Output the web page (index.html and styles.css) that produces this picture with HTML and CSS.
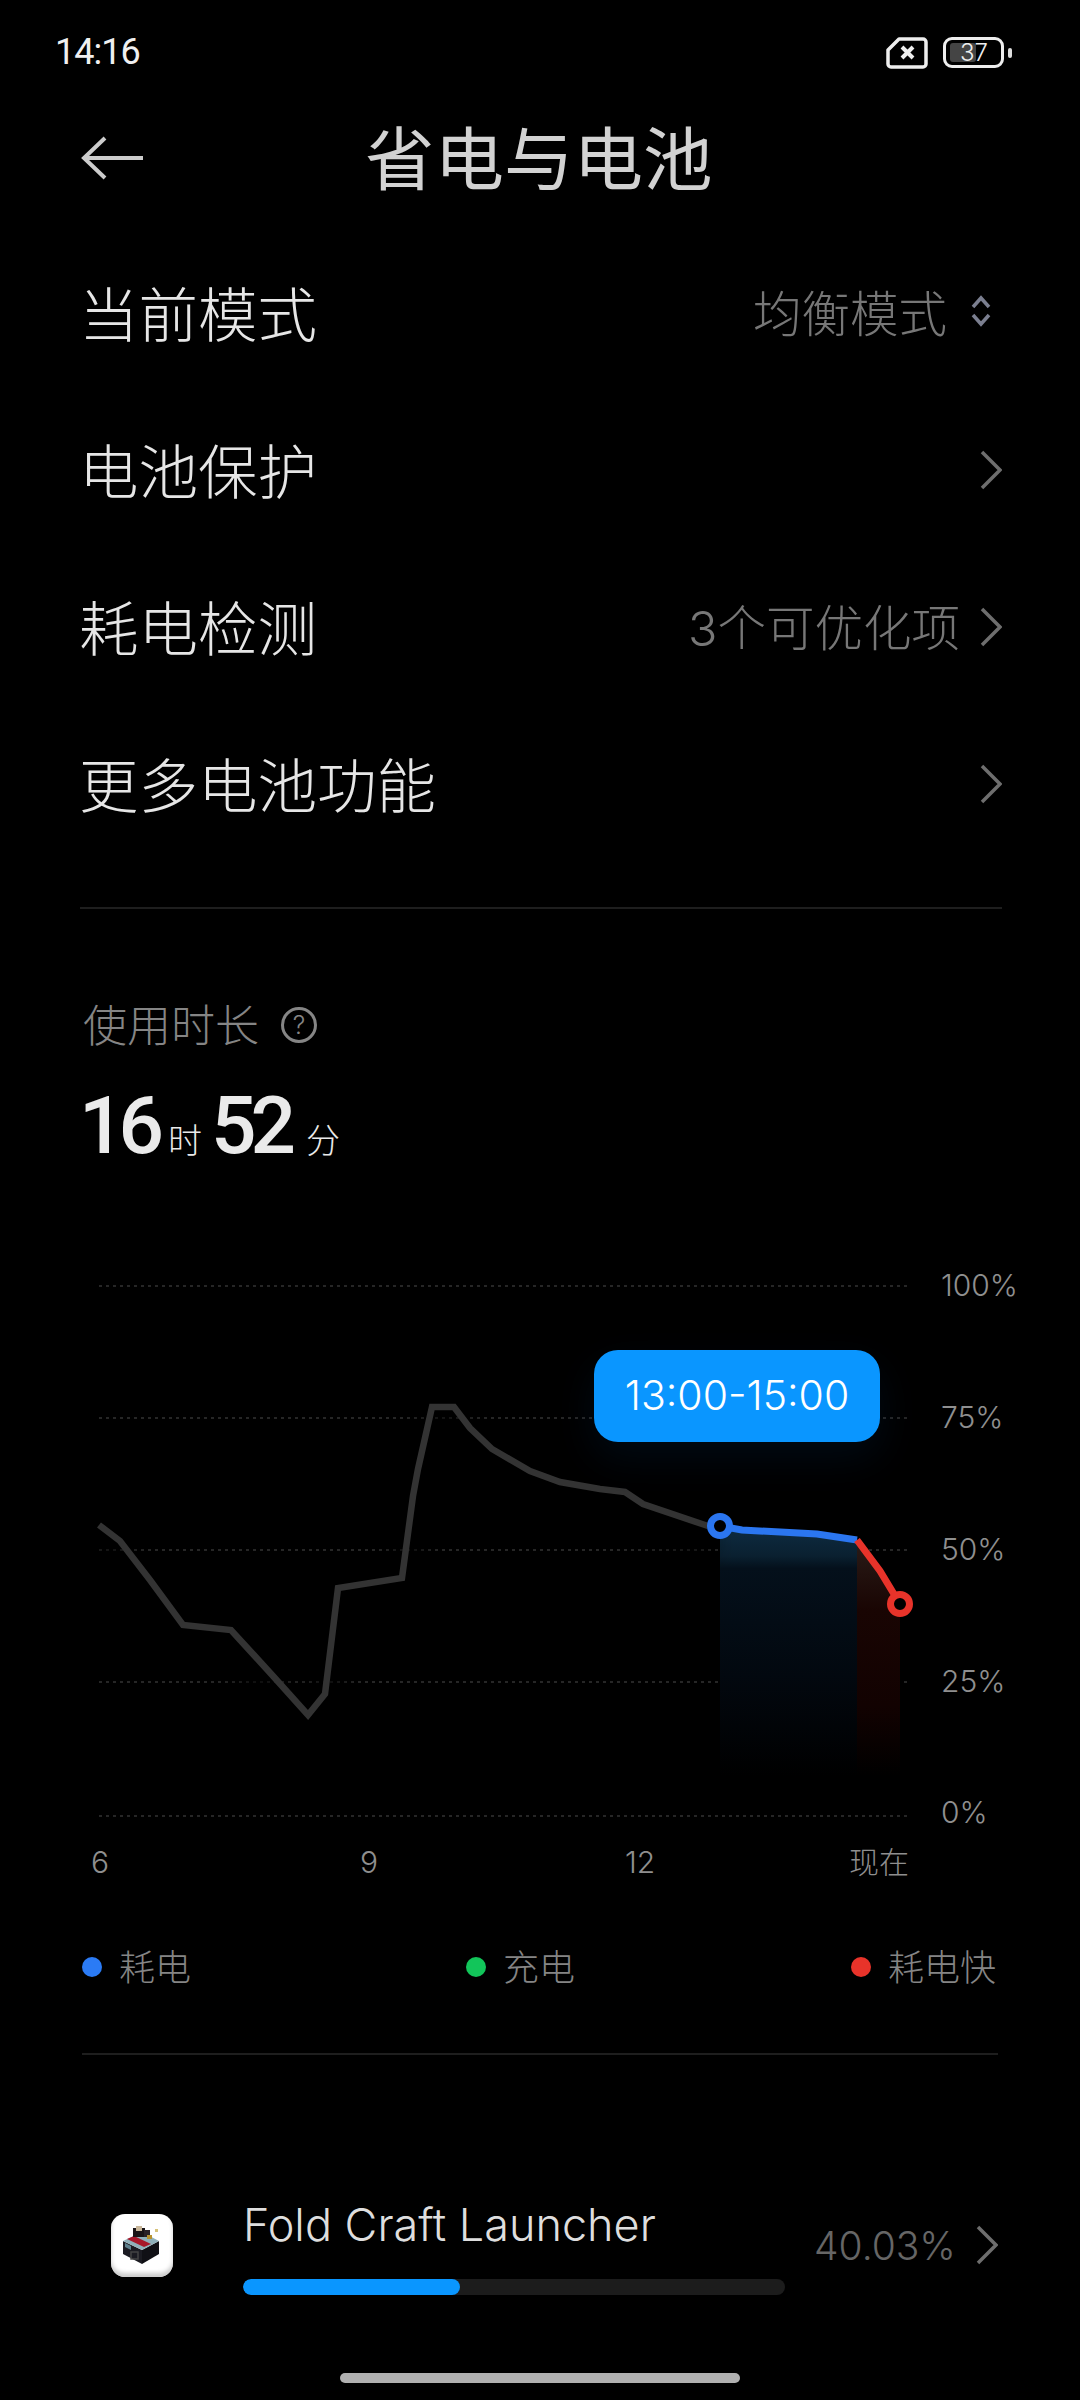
FILE: index.html
```html
<!DOCTYPE html>
<html lang="zh-CN">
<head>
  <meta charset="UTF-8" />
  <meta name="viewport" content="width=device-width, initial-scale=1.0"/>
  <title>省电与电池</title>
  <link rel="stylesheet" href="styles.css">
</head>
<body>
  <div class="page">
    <div class="status">
      <span class="clock">14:16</span>
      <div class="status-icons">
        <svg width="42" height="33" viewBox="0 0 42 33">
          <path d="M13 3H37a3 3 0 0 1 3 3V28a3 3 0 0 1-3 3H5a3 3 0 0 1-3-3V14Z" fill="none" stroke="#eee" stroke-width="3.5" stroke-linejoin="round"/>
          <path d="M16 11L27 22M27 11L16 22" stroke="#eee" stroke-width="4"/>
        </svg>
        <div class="battery">
          <div class="battery-fill"></div>
          <span class="battery-num">37</span>
        </div>
        <div class="battery-nub"></div>
      </div>
    </div>

    <div class="header">
      <svg class="back" width="64" height="44" viewBox="0 0 64 44">
        <path d="M62 22H4M24 2L3 22L24 42" fill="none" stroke="#ccc" stroke-width="4"/>
      </svg>
      <h1>省电与电池</h1>
    </div>

    <div class="list">
      <div class="row">
        <span class="row-label">当前模式</span>
        <span class="row-value">均衡模式</span>
        <svg class="updown" width="24" height="34" viewBox="0 0 24 34">
          <path d="M4 13L12 4L20 13M4 21L12 30L20 21" fill="none" stroke="#7b7f90" stroke-width="3.5"/>
        </svg>
      </div>
      <div class="row">
        <span class="row-label">电池保护</span>
        <svg class="chevron" width="22" height="40" viewBox="0 0 22 40"><path d="M2 2L20 20L2 38"/></svg>
      </div>
      <div class="row">
        <span class="row-label">耗电检测</span>
        <span class="row-value">3个可优化项</span>
        <svg class="chevron" width="22" height="40" viewBox="0 0 22 40"><path d="M2 2L20 20L2 38"/></svg>
      </div>
      <div class="row">
        <span class="row-label">更多电池功能</span>
        <svg class="chevron" width="22" height="40" viewBox="0 0 22 40"><path d="M2 2L20 20L2 38"/></svg>
      </div>
    </div>

    <div class="divider top-divider"></div>

    <div class="usage-title">
      <span>使用时长</span>
      <span class="help">?</span>
    </div>
    <div class="duration">
      <span class="big">16</span><span class="unit">时</span><span class="big">52</span><span class="unit unit-min">分</span>
    </div>

    <div class="chart">
      <svg width="1080" height="640" viewBox="0 1250 1080 640">
        <defs>
          <linearGradient id="blueFade" x1="0" y1="0" x2="0" y2="1">
            <stop offset="0" stop-color="#0e2c42"/>
            <stop offset="0.12" stop-color="#0a2030"/>
            <stop offset="0.17" stop-color="#04101b"/>
            <stop offset="0.6" stop-color="#02080f"/>
            <stop offset="1" stop-color="#000"/>
          </linearGradient>
          <linearGradient id="redFade" x1="0" y1="0" x2="0" y2="1">
            <stop offset="0" stop-color="#2a1c18"/>
            <stop offset="0.3" stop-color="#190503"/>
            <stop offset="0.7" stop-color="#120201"/>
            <stop offset="1" stop-color="#000"/>
          </linearGradient>
          <filter id="soft" x="-10%" y="-20%" width="120%" height="150%">
            <feGaussianBlur stdDeviation="12"/>
          </filter>
        </defs>

        <g class="grid">
          <line x1="99" y1="1286" x2="910" y2="1286"/>
          <line x1="99" y1="1418" x2="910" y2="1418"/>
          <line x1="99" y1="1550" x2="910" y2="1550"/>
          <line x1="99" y1="1682" x2="910" y2="1682"/>
          <line x1="99" y1="1816" x2="910" y2="1816"/>
        </g>

        <polygon points="720,1526 742,1530 817,1534 857,1540 857,1776 720,1776" fill="url(#blueFade)"/>
        <polygon points="857,1540 880,1571 900,1604 900,1776 857,1776" fill="url(#redFade)"/>

        <polyline class="glow" transform="translate(0 20)" points="99,1525 120,1541 150,1580 183,1625 231,1630 273,1676 308,1700 325,1694 338,1588 402,1578 413,1496 418,1469 432,1407 454,1407 470,1428 492,1449 530,1471 560,1482 600,1489 625,1492 643,1504 708,1526" filter="url(#soft)"/>
        <polyline class="line-gray" points="99,1525 120,1541 150,1580 183,1625 231,1630 273,1676 308,1715 325,1694 338,1588 402,1578 413,1496 418,1469 432,1407 454,1407 470,1428 492,1449 530,1471 560,1482 600,1489 625,1492 643,1504 708,1526"/>
        <polyline class="line-blue" points="720,1526 742,1530 817,1534 857,1540"/>
        <polyline class="line-red" points="857,1540 880,1571 900,1604"/>
        <circle class="dot-blue" cx="720" cy="1526" r="9.5"/>
        <circle class="dot-red" cx="900" cy="1604" r="9.5"/>

        <text class="axis" x="941" y="1296">100%</text>
        <text class="axis" x="941" y="1428">75%</text>
        <text class="axis" x="941" y="1560">50%</text>
        <text class="axis" x="941" y="1692">25%</text>
        <text class="axis" x="941" y="1823">0%</text>

        <text class="axis" x="91" y="1873">6</text>
        <text class="axis" x="360" y="1873">9</text>
        <text class="axis" x="625" y="1873">12</text>
        <text class="axis" x="849" y="1873">现在</text>
      </svg>
      <div class="tip">13:00-15:00</div>
    </div>

    <div class="legend">
      <div class="legend-item"><span class="ldot blue"></span><span class="legend-text">耗电</span></div>
      <div class="legend-item"><span class="ldot green"></span><span class="legend-text">充电</span></div>
      <div class="legend-item"><span class="ldot red"></span><span class="legend-text">耗电快</span></div>
    </div>

    <div class="divider bottom-divider"></div>

    <div class="app">
      <div class="app-icon">
        <svg width="62" height="62" viewBox="0 0 62 62">
          <polygon points="12,27 31,36 31,50 12,40" fill="#1b1b22"/>
          <polygon points="48,27 31,36 31,50 48,40" fill="#101015"/>
          <polygon points="12,27 31,18 48,27 31,36" fill="#8fb0ba"/>
          <polygon points="16,25 33,33 40,30 23,22" fill="#a8182a"/>
          <polygon points="14,29 20,32 20,36 14,33" fill="#5d7f8c"/>
          <rect x="20" y="38" width="7" height="7" fill="none" stroke="#444" stroke-width="1.5"/>
          <rect x="22" y="14" width="12" height="9" fill="#1a1416"/>
          <rect x="25" y="12" width="6" height="5" fill="#c9b79a"/>
          <rect x="33" y="16" width="6" height="7" fill="#2a2226"/>
          <rect x="36" y="21" width="5" height="4" fill="#b7912e"/>
          <rect x="44" y="15" width="3" height="3" fill="#d6c27a"/>
        </svg>
      </div>
      <div class="app-main">
        <div class="app-name">Fold Craft Launcher</div>
        <div class="bar"><div class="bar-fill" style="width: 40.03%"></div></div>
      </div>
      <span class="app-pct">40.03%</span>
      <svg class="chevron" width="22" height="40" viewBox="0 0 22 40"><path d="M2 2L20 20L2 38"/></svg>
    </div>

    <div class="home-bar"></div>
  </div>
</body>
</html>
```

FILE: styles.css
```css
* {
  box-sizing: border-box;
}
body {
  margin: 0;
  background: #000;
  font-family: Inter, "Noto Sans CJK SC", sans-serif;
  font-weight: 300;
}
.page {
  width: 1080px;
  height: 2400px;
  overflow: hidden;
  background: #000;
}
.status {
  height: 104px;
  padding: 36px 68px 0 55px;
  display: flex;
  justify-content: space-between;
  align-items: flex-start;
}
.clock {
  color: #f0f0f0;
  font-size: 36px;
  line-height: 32px;
  font-weight: 400;
  letter-spacing: -1px;
  font-family: Roboto, sans-serif;
}
.status-icons {
  display: flex;
  align-items: center;
}
.status-icons svg {
  margin-right: 15px;
}
.battery {
  width: 61px;
  height: 31px;
  border: 3px solid #eee;
  border-radius: 9px;
  display: flex;
  align-items: center;
  position: relative;
  padding-left: 4px;
}
.battery-fill {
  width: 26px;
  height: 19px;
  background: #444;
  border-radius: 3px;
}
.battery-num {
  position: absolute;
  left: 14px;
  top: -2px;
  color: #eee;
  font-size: 24px;
  line-height: 30px;
}
.battery-nub {
  width: 4px;
  height: 10px;
  background: #ddd;
  border-radius: 2px;
  margin-left: 4px;
}
.header {
  height: 108px;
  padding-left: 81px;
  display: flex;
  align-items: center;
}
.back {
  flex: none;
}
h1 {
  margin: 0 0 8px 220px;
  color: #d2d2d2;
  font-size: 69.5px;
  font-weight: 400;
}
.list {
  margin-top: 20px;
  padding: 0 78px 0 79px;
}
.row {
  height: 157px;
  display: flex;
  align-items: center;
}
.row-label {
  color: #e6e6e6;
  font-size: 59.5px;
  margin-right: auto;
}
.row-value {
  color: #777;
  font-size: 48.5px;
}
.updown {
  margin: 0 9px 0 22px;
}
.chevron {
  margin-left: 20px;
  flex: none;
}
.row .chevron {
  margin-top: 5px;
}
.chevron path {
  fill: none;
  stroke: #6e6e6e;
  stroke-width: 3.5;
}
.divider {
  height: 2px;
  background: #1e1e1e;
}
.top-divider {
  margin: 47px 78px 0 80px;
}
.usage-title {
  margin-top: 84px;
  padding-left: 83px;
  height: 60px;
  display: flex;
  align-items: center;
  color: #858585;
  font-size: 44px;
}
.help {
  width: 36px;
  height: 36px;
  margin: 3px 0 0 22px;
  border: 3px solid #858585;
  border-radius: 50%;
  font-size: 25px;
  line-height: 30px;
  text-align: center;
}
.duration {
  margin-top: 28px;
  height: 90px;
  padding-left: 79px;
  color: #eaeaea;
  display: flex;
  align-items: baseline;
}
.big {
  font-family: Roboto, sans-serif;
  font-size: 80px;
  line-height: 90px;
  font-weight: 500;
  letter-spacing: -6px;
}
.unit {
  font-size: 34px;
  margin: 0 9px 0 10px;
}
.unit-min {
  margin-left: 16px;
}
.chart {
  margin-top: 79px;
  height: 640px;
  position: relative;
}
.chart svg {
  display: block;
}
.grid line {
  stroke: #333;
  stroke-width: 1.5;
  stroke-dasharray: 3 4;
}
.line-gray,
.line-blue,
.line-red,
.glow {
  fill: none;
  stroke-width: 7;
  stroke-linejoin: miter;
}
.line-gray {
  stroke: #333;
  stroke-width: 6.5;
}
.glow {
  stroke: #060606;
  stroke-width: 20;
}
.line-blue {
  stroke: #2b76f0;
}
.line-red {
  stroke: #e8332a;
}
.dot-blue,
.dot-red {
  fill: #000;
  stroke-width: 7;
}
.dot-blue {
  stroke: #2b76f0;
}
.dot-red {
  stroke: #e8332a;
}
.axis {
  fill: #8f8f8f;
  font-size: 30px;
}
.tip {
  position: absolute;
  left: 594px;
  top: 100px;
  width: 286px;
  height: 92px;
  background: #0a96ff;
  border-radius: 24px;
  color: #fff;
  font-size: 41px;
  line-height: 90px;
  text-align: center;
  box-shadow: 0 16px 40px rgba(10, 100, 200, 0.1);
}
.legend {
  margin-top: 52px;
  height: 50px;
  padding-left: 82px;
  display: grid;
  grid-template-columns: 384px 385px auto;
  color: #858585;
  font-size: 36px;
}
.legend-item {
  display: flex;
  align-items: center;
}
.legend-text {
  margin-top: -5px;
}
.ldot {
  width: 20px;
  height: 20px;
  border-radius: 50%;
  margin-right: 17px;
}
.ldot.blue {
  background: #2b7bf5;
}
.ldot.green {
  background: #12c55a;
}
.ldot.red {
  background: #e8332a;
}
.bottom-divider {
  margin: 61px 82px 0 82px;
}
.app {
  margin-top: 140px;
  height: 100px;
  padding: 0 82px 0 111px;
  display: flex;
  align-items: center;
}
.app-icon {
  width: 62px;
  height: 63px;
  background: #fff;
  border-radius: 14px;
  box-shadow: inset 0 -4px 4px #ccc;
  flex: none;
}
.app-icon svg {
  display: block;
}
.app-main {
  width: 542px;
  margin-left: 70px;
  flex: none;
}
.app-name {
  color: #dedede;
  font-size: 45px;
  line-height: 60px;
  margin-bottom: 24px;
  white-space: nowrap;
}
.bar {
  height: 16px;
  background: #1c1c1c;
  border-radius: 8px;
  overflow: hidden;
}
.bar-fill {
  height: 100%;
  background: #0a96ff;
  border-radius: 8px;
}
.app-pct {
  margin-left: 29px;
  margin-right: auto;
  color: #666;
  font-size: 39px;
}
.home-bar {
  width: 400px;
  height: 10px;
  margin: 78px auto 0;
  background: #b0b0b0;
  border-radius: 5px;
}
```
